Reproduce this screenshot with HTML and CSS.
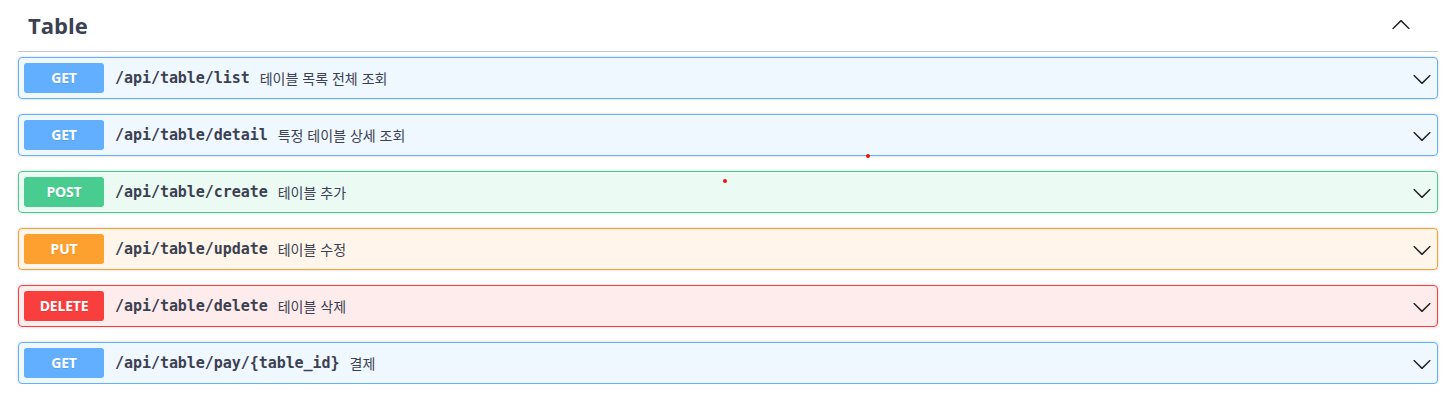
FILE: index.html
```html
<!DOCTYPE html>
<html lang="ko">
<head>
<meta charset="utf-8">
<title>Table</title>
<link rel="stylesheet" href="styles.css">
</head>
<body>
<div class="section">
  <h3 class="tag">
    <span class="tag-name">Table</span>
    <svg class="tag-arrow" width="20" height="20" viewBox="0 0 20 20"><path d="M17.418 14.908c.272.268.709.268.979 0s.271-.701 0-.969l-7.908-7.83c-.27-.268-.707-.268-.979 0l-7.908 7.83c-.27.268-.27.701 0 .969.271.268.709.268.979 0L10 7.767l7.418 7.141z"/></svg>
  </h3>
  <div class="ops">
    <div class="op get">
      <span class="method">GET</span>
      <span class="path">/api/table/list</span>
      <span class="desc">테이블 목록 전체 조회</span>
      <svg class="arrow" width="20" height="20" viewBox="0 0 20 20"><path d="M17.418 6.109c.272-.268.709-.268.979 0s.271.701 0 .969l-7.908 7.83c-.27.268-.707.268-.979 0l-7.908-7.83c-.27-.268-.27-.701 0-.969.271-.268.709-.268.979 0L10 13.25l7.418-7.141z"/></svg>
    </div>
    <div class="op get">
      <span class="method">GET</span>
      <span class="path">/api/table/detail</span>
      <span class="desc">특정 테이블 상세 조회</span>
      <svg class="arrow" width="20" height="20" viewBox="0 0 20 20"><path d="M17.418 6.109c.272-.268.709-.268.979 0s.271.701 0 .969l-7.908 7.83c-.27.268-.707.268-.979 0l-7.908-7.83c-.27-.268-.27-.701 0-.969.271-.268.709-.268.979 0L10 13.25l7.418-7.141z"/></svg>
    </div>
    <div class="op post">
      <span class="method">POST</span>
      <span class="path">/api/table/create</span>
      <span class="desc">테이블 추가</span>
      <svg class="arrow" width="20" height="20" viewBox="0 0 20 20"><path d="M17.418 6.109c.272-.268.709-.268.979 0s.271.701 0 .969l-7.908 7.83c-.27.268-.707.268-.979 0l-7.908-7.83c-.27-.268-.27-.701 0-.969.271-.268.709-.268.979 0L10 13.25l7.418-7.141z"/></svg>
    </div>
    <div class="op put">
      <span class="method">PUT</span>
      <span class="path">/api/table/update</span>
      <span class="desc">테이블 수정</span>
      <svg class="arrow" width="20" height="20" viewBox="0 0 20 20"><path d="M17.418 6.109c.272-.268.709-.268.979 0s.271.701 0 .969l-7.908 7.83c-.27.268-.707.268-.979 0l-7.908-7.83c-.27-.268-.27-.701 0-.969.271-.268.709-.268.979 0L10 13.25l7.418-7.141z"/></svg>
    </div>
    <div class="op delete">
      <span class="method">DELETE</span>
      <span class="path">/api/table/delete</span>
      <span class="desc">테이블 삭제</span>
      <svg class="arrow" width="20" height="20" viewBox="0 0 20 20"><path d="M17.418 6.109c.272-.268.709-.268.979 0s.271.701 0 .969l-7.908 7.83c-.27.268-.707.268-.979 0l-7.908-7.83c-.27-.268-.27-.701 0-.969.271-.268.709-.268.979 0L10 13.25l7.418-7.141z"/></svg>
    </div>
    <div class="op get">
      <span class="method">GET</span>
      <span class="path">/api/table/pay/{table_id}</span>
      <span class="desc">결제</span>
      <svg class="arrow" width="20" height="20" viewBox="0 0 20 20"><path d="M17.418 6.109c.272-.268.709-.268.979 0s.271.701 0 .969l-7.908 7.83c-.27.268-.707.268-.979 0l-7.908-7.83c-.27-.268-.27-.701 0-.969.271-.268.709-.268.979 0L10 13.25l7.418-7.141z"/></svg>
    </div>
  </div>
  <span class="dot dot-a"></span>
  <span class="dot dot-b"></span>
</div>
</body>
</html>
```
FILE: styles.css
```css
html, body {
  margin: 0;
  padding: 0;
  background: #ffffff;
}

.section {
  position: relative;
  padding: 0 15px 0 18px;
  font-family: "Noto Sans", "Noto Sans CJK KR", sans-serif;
  color: #3b4151;
}

.tag {
  display: flex;
  align-items: center;
  margin: 0 0 5px 0;
  padding: 10px 0 10px 10px;
  height: 31px;
  border-bottom: 1px solid rgba(59, 65, 81, 0.3);
  font-family: "Open Sans", "Noto Sans", sans-serif;
  font-size: 22px;
  font-weight: 700;
  color: #3b4151;
}

.tag-name {
  flex: 1;
  line-height: 31px;
}

.tag-arrow {
  fill: #222;
  margin-right: 27px;
  margin-top: -3px;
}

.ops {
  display: flex;
  flex-direction: column;
  gap: 15px;
}

.op {
  display: flex;
  align-items: center;
  height: 30px;
  padding: 5px;
  border: 1px solid #61affe;
  border-radius: 4px;
  box-shadow: 0 0 3px rgba(0, 0, 0, 0.19);
  background: rgba(97, 175, 254, 0.1);
}

.method {
  display: inline-block;
  min-width: 80px;
  height: 30px;
  line-height: 30px;
  text-align: center;
  border-radius: 3px;
  background: #61affe;
  color: #fff;
  font-family: "Open Sans", "Noto Sans", sans-serif;
  font-size: 14px;
  font-weight: 700;
  letter-spacing: -0.2px;
  text-shadow: 0 1px 0 rgba(0, 0, 0, 0.1);
}

.path {
  padding: 0 10px 0 11px;
  font-family: "DejaVu Sans Mono", "Liberation Mono", monospace;
  font-size: 15px;
  font-weight: 600;
  color: #3b4151;
  letter-spacing: -0.05px;
}

.desc {
  flex: 1;
  font-family: "Noto Sans CJK KR", "Noto Sans", sans-serif;
  font-size: 14px;
  color: #3b4151;
}

.arrow {
  fill: #222;
  margin-top: 2px;
}

.op.post {
  border-color: #49cc90;
  background: rgba(73, 204, 144, 0.1);
}
.op.post .method { background: #49cc90; }

.op.put {
  border-color: #fca130;
  background: rgba(252, 161, 48, 0.1);
}
.op.put .method { background: #fca130; }

.op.delete {
  border-color: #f93e3e;
  background: rgba(249, 62, 62, 0.1);
}
.op.delete .method { background: #f93e3e; }

.dot {
  position: absolute;
  width: 4px;
  height: 4px;
  border-radius: 50%;
  background: #e8141a;
}
.dot-a { left: 866px; top: 154px; }
.dot-b { left: 723px; top: 179px; }
```
